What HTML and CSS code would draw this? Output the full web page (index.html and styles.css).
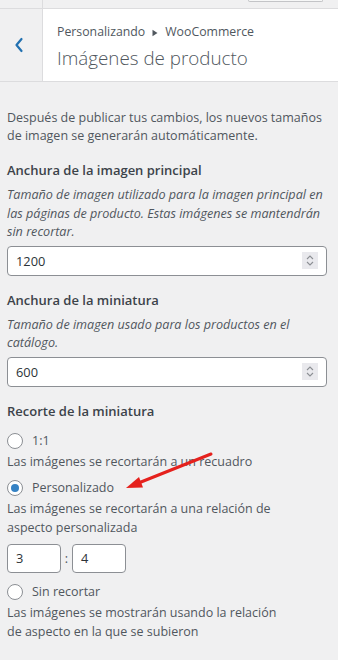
FILE: index.html
```html
<!DOCTYPE html>
<html lang="es">
<head>
<meta charset="utf-8">
<title>Imágenes de producto</title>
<link rel="stylesheet" href="styles.css">
</head>
<body>
<div class="page">
  <div class="topbar">
    <div class="tb-left"></div>
    <div class="tb-right"><span class="tb-btn"></span></div>
  </div>
  <div class="header">
    <div class="back">
      <svg width="10" height="16" viewBox="0 0 10 16"><path d="M7.5 2 L2.5 8 L7.5 14" fill="none" stroke="#2271b1" stroke-width="2.2" stroke-linecap="round" stroke-linejoin="round"/></svg>
    </div>
    <div class="titles">
      <div class="crumb">Personalizando <svg class="tri" width="6" height="8" viewBox="0 0 6 8"><path d="M0.5 0.8 L5.5 4 L0.5 7.2 Z" fill="#50575e"/></svg> WooCommerce</div>
      <h1 class="title">Imágenes de producto</h1>
    </div>
  </div>

  <div class="content">
    <p class="intro">Después de publicar tus cambios, los nuevos tamaños de imagen se generarán automáticamente.</p>

    <div class="control first">
      <h2 class="label">Anchura de la imagen principal</h2>
      <p class="desc">Tamaño de imagen utilizado para la imagen principal en las páginas de producto. Estas imágenes se mantendrán sin recortar.</p>
      <div class="field">
        <span class="value">1200</span>
        <span class="spin"><svg width="16" height="17" viewBox="0 0 16 17"><path d="M5 7 L8 4 L11 7" fill="none" stroke="#8c8f94" stroke-width="1.1"/><path d="M5 10 L8 13 L11 10" fill="none" stroke="#8c8f94" stroke-width="1.1"/></svg></span>
      </div>
    </div>

    <div class="control">
      <h2 class="label">Anchura de la miniatura</h2>
      <p class="desc">Tamaño de imagen usado para los productos en el catálogo.</p>
      <div class="field">
        <span class="value">600</span>
        <span class="spin"><svg width="16" height="17" viewBox="0 0 16 17"><path d="M5 7 L8 4 L11 7" fill="none" stroke="#8c8f94" stroke-width="1.1"/><path d="M5 10 L8 13 L11 10" fill="none" stroke="#8c8f94" stroke-width="1.1"/></svg></span>
      </div>
    </div>

    <div class="control">
      <h2 class="label">Recorte de la miniatura</h2>
      <div class="radios">
        <div class="radio-row"><span class="radio"></span><span class="rlabel">1:1</span></div>
        <p class="rdesc">Las imágenes se recortarán a un recuadro</p>

        <div class="radio-row next"><span class="radio checked"></span><span class="rlabel">Personalizado</span></div>
        <p class="rdesc">Las imágenes se recortarán a una relación de aspecto personalizada</p>
        <div class="ratio">
          <span class="small-field">3</span>
          <span class="colon">:</span>
          <span class="small-field">4</span>
        </div>

        <div class="radio-row last"><span class="radio"></span><span class="rlabel">Sin recortar</span></div>
        <p class="rdesc">Las imágenes se mostrarán usando la relación de aspecto en la que se subieron</p>
      </div>
    </div>
  </div>

  <svg class="arrow" width="338" height="660" viewBox="0 0 338 660">
    <line x1="211" y1="454" x2="136" y2="484" stroke="#e5211d" stroke-width="3" stroke-linecap="round"/>
    <path d="M126 488 L139 477 L143 487.5 Z" fill="#e5211d"/>
  </svg>
</div>
</body>
</html>
```

FILE: styles.css
```css
* { box-sizing: border-box; }

html, body {
  margin: 0;
  padding: 0;
  background: #f0f0f1;
}

body {
  font-family: "Open Sans", "Noto Sans", sans-serif;
  font-size: 12.5px;
  color: #50575e;
}

.page {
  position: relative;
  width: 338px;
  height: 660px;
  overflow: hidden;
}

.topbar {
  display: flex;
  height: 9px;
  border-bottom: 1px solid #dcdcde;
}

.tb-left {
  width: 43px;
  border-right: 1px solid #dcdcde;
}

.tb-right {
  flex: 1;
  display: flex;
  justify-content: flex-end;
  padding-right: 15px;
}

.tb-btn {
  width: 75px;
  height: 2px;
  background: #f6f7f7;
  border: 1px solid #c3c4c7;
  border-top: none;
  border-radius: 0 0 3px 3px;
}

.header {
  display: flex;
  height: 73px;
  background: #fff;
  border-bottom: 1px solid #dcdcde;
}

.back {
  width: 43px;
  background: #f0f0f1;
  border-right: 1px solid #dcdcde;
  display: flex;
  align-items: center;
  justify-content: center;
  padding-right: 5px;
}

.back svg { display: block; }

.titles {
  padding: 13px 0 0 14px;
}

.crumb {
  font-size: 12.3px;
  line-height: 20px;
  color: #50575e;
  display: flex;
  align-items: center;
  gap: 7px;
}

.tri { display: block; margin-top: 1px; }

.title {
  margin: 3px 0 0;
  font-size: 18.8px;
  font-weight: 300;
  line-height: 26px;
  color: #50575e;
}

.content {
  padding: 26px 11px 0 7px;
}

.intro {
  margin: 0;
  line-height: 18px;
  padding-top: 1px;
}

.control { margin-top: 14px; }
.control.first { margin-top: 15px; }

.label {
  margin: 0;
  font-size: 13px;
  font-weight: 600;
  line-height: 20px;
  color: #3c434a;
}

.desc {
  margin: 6px 0 0;
  font-style: italic;
  font-size: 12.6px;
  line-height: 18.5px;
}

.field {
  margin-top: 4px;
  height: 30px;
  background: #fff;
  border: 1px solid #8c8f94;
  border-radius: 4px;
  display: flex;
  align-items: center;
  padding: 0 8px;
  color: #2c3338;
  font-size: 12.8px;
}

.field .value { flex: 1; }

.spin {
  width: 16px;
  height: 17px;
  background: #e9e9ed;
  display: flex;
}

.spin svg { display: block; }

.radios { margin-top: 10px; }

.radio-row {
  display: flex;
  align-items: center;
  gap: 9px;
  height: 20px;
}

.radio-row.next { margin-top: 7px; }
.radio-row.last { margin-top: 9px; }

.radio {
  width: 16px;
  height: 16px;
  border: 1px solid #8c8f94;
  border-radius: 50%;
  background: #fff;
  display: flex;
  align-items: center;
  justify-content: center;
}

.radio.checked::after {
  content: "";
  width: 8px;
  height: 8px;
  border-radius: 50%;
  background: #3582c4;
}

.rlabel { line-height: 20px; }

.rdesc {
  margin: 1px 0 0;
  line-height: 19px;
  width: 285px;
}

.ratio {
  display: flex;
  align-items: center;
  gap: 3px;
  margin-top: 7px;
}

.small-field {
  width: 54px;
  height: 29px;
  background: #fff;
  border: 1px solid #8c8f94;
  border-radius: 4px;
  padding-left: 8px;
  display: flex;
  align-items: center;
  color: #2c3338;
  font-size: 12.8px;
}

.colon {
  width: 5px;
  text-align: center;
}

.arrow {
  position: absolute;
  left: 0;
  top: 0;
  pointer-events: none;
}
```
